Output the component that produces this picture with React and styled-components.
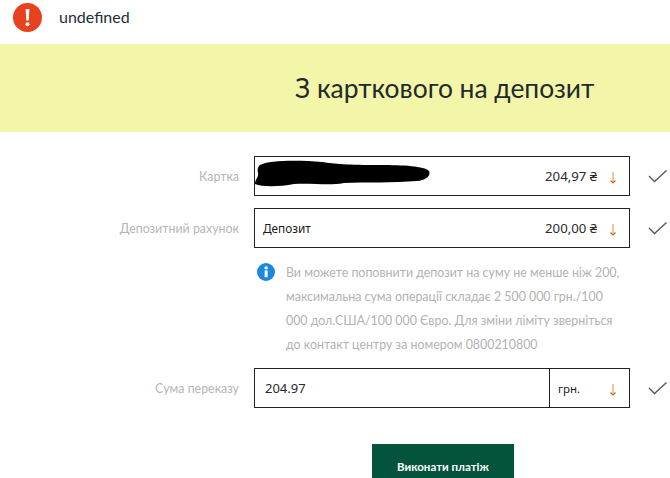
import React from 'react'
import styled, { createGlobalStyle } from 'styled-components'

const Global = createGlobalStyle`
html, body {
  margin: 0;
  padding: 0;
  background: #fff;
  overflow: hidden;
}
body {
  font-family: "Lato", "Noto Sans", sans-serif;
}
`

const Page = styled.div`
width: 670px;
height: 478px;
overflow: hidden;
display: flex;
flex-direction: column;
`

const Alert = styled.div`
flex: none;
height: 44px;
display: flex;
align-items: center;
padding: 0 0 10px 13px;
box-sizing: border-box;
gap: 17px;
`

const AlertText = styled.span`
color: #1f2d3a;
font-size: 16px;
margin-top: -2px;
`

const Banner = styled.div`
flex: none;
height: 88px;
background: #f3f6a9;
display: flex;
align-items: center;
padding: 0 0 0 295px;
box-sizing: border-box;
`

const Title = styled.h1`
margin: 0;
font-family: "Lato", sans-serif;
font-weight: 400;
font-size: 26.4px;
color: #22292c;
`

const Form = styled.div`
flex: none;
display: flex;
flex-direction: column;
padding-top: 24px;
`

const Row = styled.div`
display: grid;
grid-template-columns: 239px 376px 40px;
column-gap: 15px;
width: 670px;
align-items: center;
margin-bottom: ${p => p.$mb ?? 12}px;
`

const Label = styled.div`
text-align: right;
color: #b5b5b5;
font-size: 12.4px;
`

const Box = styled.div`
position: relative;
height: 40px;
box-sizing: border-box;
border: 1px solid #222;
display: flex;
align-items: center;
padding-left: 8px;
`

const BoxName = styled.span`
flex: 1;
font-family: "Noto Sans", sans-serif;
font-size: 11.8px;
color: #1b1b1b;
`

const Amount = styled.span`
font-family: "Noto Sans", sans-serif;
font-size: 13.2px;
color: #2a2a2a;
margin-right: 12px;
`

const Arrow = styled.svg`
width: 8px;
height: 13px;
margin: 3px 12px 0 0;
flex: none;
`

const Scribble = styled.svg`
position: absolute;
left: -1px;
top: 2px;
width: 176px;
height: 30px;
`

const Check = styled.svg`
width: 20px;
height: 14px;
margin-left: 3px;
`

const Info = styled.div`
margin: 0 0 12px 257px;
display: flex;
gap: 11px;
width: 375px;
`

const InfoIcon = styled.svg`
width: 18px;
height: 18px;
flex: none;
margin-top: 3px;
`

const InfoText = styled.div`
color: #b2b2b2;
font-size: 12.4px;
line-height: 24px;
font-weight: 400;
white-space: nowrap;
position: relative;
top: 1px;
`

const AmountInput = styled.div`
flex: 1;
height: 100%;
display: flex;
align-items: center;
font-family: "Noto Sans", sans-serif;
font-size: 13px;
color: #2a2a2a;
padding-left: 2px;
border-right: 1px solid #222;
`

const Currency = styled.div`
width: 79px;
height: 100%;
box-sizing: border-box;
display: flex;
align-items: center;
justify-content: space-between;
padding-left: 8px;
font-family: "Noto Sans", sans-serif;
font-size: 11.5px;
color: #1b1b1b;
`

const Actions = styled.div`
padding: 36px 0 0 372px;
`

const Submit = styled.button`
display: block;
width: 142px;
height: 44px;
border: none;
background: #03533d;
color: #fff;
font-family: "Lato", sans-serif;
font-size: 11.5px;
font-weight: 700;
padding: 0;
`

function DownArrow() {
  return (
    <Arrow viewBox="0 0 8 13">
      <path d="M4 1V11.5" stroke="#f0a15c" strokeWidth="1.2" fill="none" />
      <path d="M1.5 9.5L4 12L6.5 9.5" stroke="#c8641e" strokeWidth="1.1" fill="none" />
    </Arrow>
  )
}

function Tick() {
  return (
    <Check viewBox="0 0 20 14">
      <path d="M1 7L6.5 12.5L18.5 1.5" stroke="#555" strokeWidth="1.3" fill="none" />
    </Check>
  )
}

export default function App() {
  return (
    <Page>
      <Global />
      <Alert>
        <svg width="29" height="29" viewBox="0 0 29 29">
          <circle cx="14.5" cy="14.5" r="14.5" fill="#e8411f" />
          <path d="M12.6 6H16.4L15.7 17.5H13.3Z" fill="#fff" />
          <circle cx="14.5" cy="21.3" r="2" fill="#fff" />
        </svg>
        <AlertText>undefined</AlertText>
      </Alert>
      <Banner>
        <Title>З карткового на депозит</Title>
      </Banner>
      <Form>
        <Row>
          <Label>Картка</Label>
          <Box>
            <BoxName />
            <Amount>204,97 ₴</Amount>
            <DownArrow />
            <Scribble viewBox="0 0 176 30">
              <path d="M6 6C15 1 45 1 68 3C80 5 95 6 125 6C150 6 170 7 175 12C177 17 172 21 163 22C140 24 110 23 90 24C75 27 60 24 40 25C25 28 8 28 1 25C1 20 5 18 4 14C3 10 4 8 6 6Z" fill="#000" />
            </Scribble>
          </Box>
          <Tick />
        </Row>
        <Row>
          <Label>Депозитний рахунок</Label>
          <Box>
            <BoxName>Депозит</BoxName>
            <Amount>200,00 ₴</Amount>
            <DownArrow />
          </Box>
          <Tick />
        </Row>
        <Info>
          <InfoIcon viewBox="0 0 17 17">
            <circle cx="8.5" cy="8.5" r="8.5" fill="#1b87e0" />
            <rect x="7.2" y="7" width="2.8" height="6.5" fill="#fff" />
            <circle cx="8.6" cy="4.6" r="1.6" fill="#fff" />
          </InfoIcon>
          <InfoText>
            Ви можете поповнити депозит на суму не менше ніж 200,<br />
            максимальна сума операції складає 2 500 000 грн./100<br />
            000 дол.США/100 000 Євро. Для зміни ліміту зверніться<br />
            до контакт центру за номером 0800210800
          </InfoText>
        </Info>
        <Row $mb={0}>
          <Label>Сума переказу</Label>
          <Box>
            <AmountInput>204.97</AmountInput>
            <Currency>
              грн.
              <DownArrow />
            </Currency>
          </Box>
          <Tick />
        </Row>
        <Actions>
          <Submit>Виконати платіж</Submit>
        </Actions>
      </Form>
    </Page>
  )
}
